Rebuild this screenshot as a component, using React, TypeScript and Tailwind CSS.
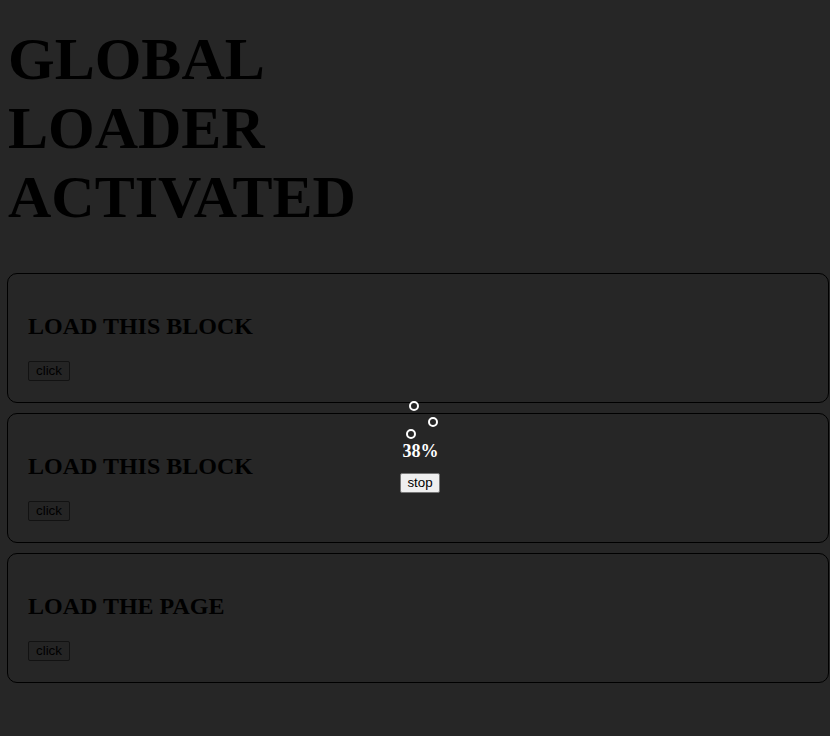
import React from "react";

const serif = { fontFamily: '"Liberation Serif", "Times New Roman", serif' };

function Card({ title }: { title: string }) {
  return (
    <div className="box-border flex h-[130px] w-[822px] flex-col items-start rounded-[10px] border border-black px-[20px] pt-[20px]">
      <h2
        className="mt-[19px] mb-[21px] text-[24px] font-bold leading-[normal] text-black"
        style={serif}
      >
        {title}
      </h2>
      <button className="box-border flex h-[20px] items-center rounded-[2px] border border-[#121212] bg-[#242424] px-[7px] text-[13.33px] leading-[16px] text-black [font-family:'Liberation_Sans',Arial,sans-serif]">
        click
      </button>
    </div>
  );
}

function Loader() {
  return (
    <div className="absolute left-[390px] top-[400px] flex w-[60px] flex-col items-center">
      <div className="relative h-[41px] w-[60px]">
        <div className="absolute left-[19px] top-[1px] h-[10px] w-[10px] rounded-full border-2 border-white" />
        <div className="absolute left-[38px] top-[17px] h-[10px] w-[10px] rounded-full border-2 border-white" />
        <div className="absolute left-[16px] top-[29px] h-[10px] w-[10px] rounded-full border-2 border-white" />
      </div>
      <div
        className="ml-[1px] text-center text-[18px] font-bold leading-[normal] text-white"
        style={serif}
      >
        38%
      </div>
      <button className="mt-[11px] box-border flex h-[20px] items-center rounded-[2px] border border-[#767676] bg-[#efefef] px-[6px] text-[13.33px] leading-[16px] text-black [font-family:'Liberation_Sans',Arial,sans-serif]">
        stop
      </button>
    </div>
  );
}

export default function App() {
  return (
    <div className="relative h-[736px] w-[830px] overflow-hidden bg-[#262626]">
      <div className="flex flex-col pl-[7px] pt-[25px]">
        <h1
          className="ml-[1px] text-[60px] font-bold leading-[normal] text-black"
          style={serif}
        >
          GLOBAL
          <br />
          LOADER
          <br />
          ACTIVATED
        </h1>
        <div className="mt-[41px] flex flex-col gap-[10px]">
          <Card title="LOAD THIS BLOCK" />
          <Card title="LOAD THIS BLOCK" />
          <Card title="LOAD THE PAGE" />
        </div>
      </div>
      <Loader />
    </div>
  );
}
